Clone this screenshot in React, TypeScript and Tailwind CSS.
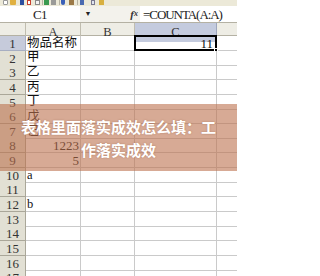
const serif = "font-['Liberation_Serif','Noto_Sans_CJK_SC',serif]";

const rows: { n: number; a?: string; aRight?: boolean; c?: string }[] = [
  { n: 1, a: "物品名称", c: "11" },
  { n: 2, a: "甲" },
  { n: 3, a: "乙" },
  { n: 4, a: "丙" },
  { n: 5, a: "丁" },
  { n: 6, a: "戊" },
  { n: 7, a: "己" },
  { n: 8, a: "1223", aRight: true },
  { n: 9, a: "5", aRight: true },
  { n: 10, a: "a" },
  { n: 11 },
  { n: 12, a: "b" },
  { n: 13 },
  { n: 14 },
  { n: 15 },
  { n: 16 },
  { n: 17 },
];

function Toolbar() {
  return (
    <div className="flex h-[6px] items-start bg-[#ece9d8] pl-[3px]">
      <span className="h-[5px] w-[5px] rounded-b-[1px] border border-[#9a9a9a] bg-white" />
      <span className="ml-[2px] h-[5px] w-[6px] rounded-b-[1px] bg-[#e0b040]" />
      <span className="ml-[4px] h-[5px] w-[4px] bg-[#2c4fa0]" />
      <span className="ml-[3px] h-[5px] w-[4px] border border-[#c84030] bg-white" />
      <span className="ml-[4px] h-[5px] w-[5px] border border-[#8a8a8a] bg-[#f4f4f4]" />
      <span className="ml-[2px] h-[5px] w-px bg-[#b8b4a4]" />
      <span className="ml-[1px] h-[5px] w-[5px] bg-[#3a9a50]" />
      <span className="ml-[2px] h-[5px] w-[5px] bg-[#9a9a98]" />
      <span className="ml-[3px] h-[5px] w-px bg-[#b8b4a4]" />
      <span className="ml-[1px] h-[5px] w-[4px] rounded-b-full bg-[#3a60b8]" />
      <span className="ml-[4px] h-[5px] w-[5px] bg-[#9c7a48]" />
      <span className="ml-[3px] h-[5px] w-px bg-[#b8b4a4]" />
      <span className="ml-[2px] h-[5px] w-[4px] bg-[#4a6ab0]" />
      <span className="ml-[7px] h-[5px] w-[4px] border border-[#7a7a90] bg-[#dfe4f0]" />
      <span className="ml-[4px] h-[5px] w-[5px] bg-[#d8b040]" />
    </div>
  );
}

function FormulaBar() {
  return (
    <div className={`flex h-[16px] items-center bg-[#f3f2ec] ${serif}`}>
      <div className="flex h-full w-[80px] items-center justify-center bg-white pt-[1px] text-[13px] tracking-[-0.5px] text-[#222]">
        C1
      </div>
      <div className="flex h-full w-[16px] items-center justify-center text-[7px] text-[#222]">
        ▼
      </div>
      <div className="flex h-full w-[44px] items-center justify-end pr-[2px] text-[11px] font-bold italic text-[#333]">
        f<span className="text-[8px]">x</span>
      </div>
      <div className="flex h-full flex-1 items-center bg-white pl-[3px] pt-[1px] text-[13px] tracking-[-1.05px] text-[#222]">
        =COUNTA(A:A)
      </div>
    </div>
  );
}

function Header() {
  return (
    <div
      className={`grid h-[14px] grid-cols-[26px_55px_54px_82px_20px] border-y border-[#b4b1a3] bg-[#eeede5] text-[12.5px] text-[#333] ${serif}`}>
      <div className="border-r border-[#c0bdaf]" />
      <div className="flex items-center justify-center border-r border-[#c0bdaf]">A</div>
      <div className="flex items-center justify-center border-r border-[#c0bdaf]">B</div>
      <div className="flex items-center justify-center border-r border-[#9ea6bc] bg-[#c4cbde]">C</div>
      <div />
    </div>
  );
}

function Row({ r }: { r: (typeof rows)[number] }) {
  const sel = r.n === 1;
  return (
    <div
      className={`grid h-[14.65px] grid-cols-[26px_55px_54px_82px_20px] text-[12.5px] leading-none text-[#111] ${serif}`}>
      <div
        className={`flex items-center justify-center border-b border-r pt-[1px] text-[13px] text-[#333] ${
          sel ? "border-[#a7aec2] bg-[#c6cbdb]" : "border-[#aaa799] bg-[#e2e0d4]"
        }`}>
        {r.n}
      </div>
      <div
        className={`flex items-center whitespace-nowrap border-b border-r border-[#cacaca] px-[1px] ${
          r.aRight ? "justify-end text-[13px]" : "justify-start"
        }`}>
        {r.a}
      </div>
      <div className="border-b border-r border-[#cacaca]" />
      <div className="relative flex items-center justify-end border-b border-r border-[#cacaca] pr-[3px] text-[13px]">
        {r.c}
        {sel && (
          <span className="absolute inset-[-1px] border-2 border-black">
            <span className="absolute -bottom-[3px] -right-[3px] h-[4px] w-[4px] border border-white bg-black" />
          </span>
        )}
      </div>
      <div className="border-b border-[#cacaca]" />
    </div>
  );
}

export default function App() {
  return (
    <div className="relative h-[276px] w-[237px] overflow-hidden bg-white">
      <Toolbar />
      <FormulaBar />
      <Header />
      {rows.map((r) => (
        <Row key={r.n} r={r} />
      ))}
      <div className="absolute left-0 right-0 top-[104px] flex h-[67px] items-center justify-center bg-[rgba(188,114,78,0.6)] px-[15px]">
        <p className="text-center text-[15px] font-bold leading-[23px] text-white font-['Noto_Sans_CJK_SC',sans-serif] [text-shadow:0_0_2px_rgba(120,60,30,0.4)]">
          表格里面落实成效怎么填：工作落实成效
        </p>
      </div>
    </div>
  );
}
